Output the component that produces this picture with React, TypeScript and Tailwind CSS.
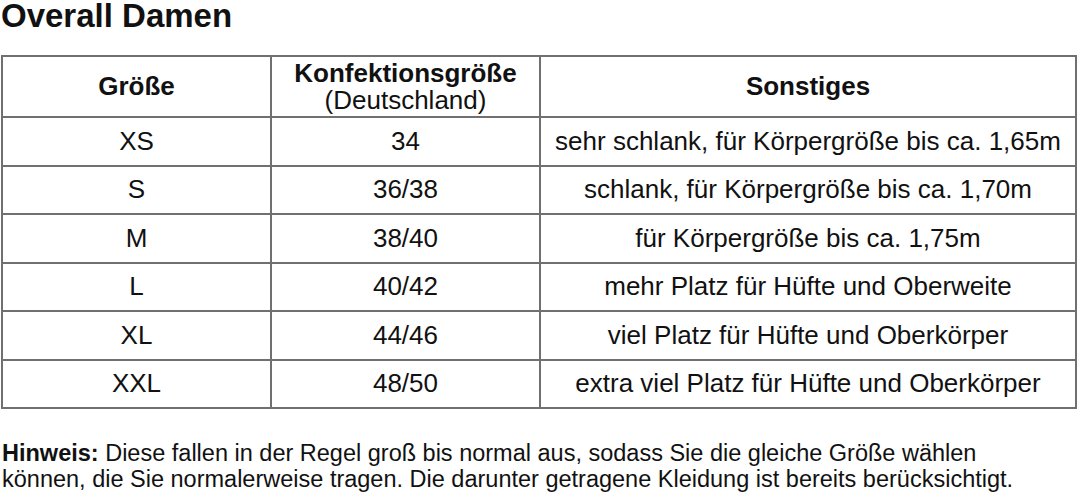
const rows = [
  { size: "XS", de: "34", note: "sehr schlank, für Körpergröße bis ca. 1,65m" },
  { size: "S", de: "36/38", note: "schlank, für Körpergröße bis ca. 1,70m" },
  { size: "M", de: "38/40", note: "für Körpergröße bis ca. 1,75m" },
  { size: "L", de: "40/42", note: "mehr Platz für Hüfte und Oberweite" },
  { size: "XL", de: "44/46", note: "viel Platz für Hüfte und Oberkörper" },
  { size: "XXL", de: "48/50", note: "extra viel Platz für Hüfte und Oberkörper" },
];

export default function App() {
  return (
    <div className="w-[1080px] h-[494px] bg-white text-[#111] font-['Liberation_Sans',Arial,sans-serif] overflow-hidden">
      <h1 className="text-[33px] font-bold leading-[32px] pl-[1px]">Overall Damen</h1>

      <table className="mt-[23px] ml-[1px] w-[1076px] border-collapse table-fixed text-[26px] leading-[27px] text-center">
        <colgroup>
          <col className="w-[269px]" />
          <col className="w-[269px]" />
          <col />
        </colgroup>
        <thead>
          <tr className="h-[61px]">
            <th className="border-2 border-[#707070] font-bold">Größe</th>
            <th className="border-2 border-[#707070]">
              <div className="font-bold">Konfektionsgröße</div>
              <div className="font-normal">(Deutschland)</div>
            </th>
            <th className="border-2 border-[#707070] font-bold">Sonstiges</th>
          </tr>
        </thead>
        <tbody>
          {rows.map((r) => (
            <tr key={r.size} className="h-[48.5px]">
              <td className="border-2 border-[#707070]">{r.size}</td>
              <td className="border-2 border-[#707070]">{r.de}</td>
              <td className="border-2 border-[#707070] whitespace-nowrap">{r.note}</td>
            </tr>
          ))}
        </tbody>
      </table>

      <p className="mt-[31px] pl-[2px] text-[23.5px] leading-[26px] whitespace-nowrap">
        <span className="font-bold">Hinweis:</span> Diese fallen in der Regel groß bis normal aus, sodass Sie die gleiche Größe wählen
        <br />
        können, die Sie normalerweise tragen. Die darunter getragene Kleidung ist bereits berücksichtigt.
      </p>
    </div>
  );
}
